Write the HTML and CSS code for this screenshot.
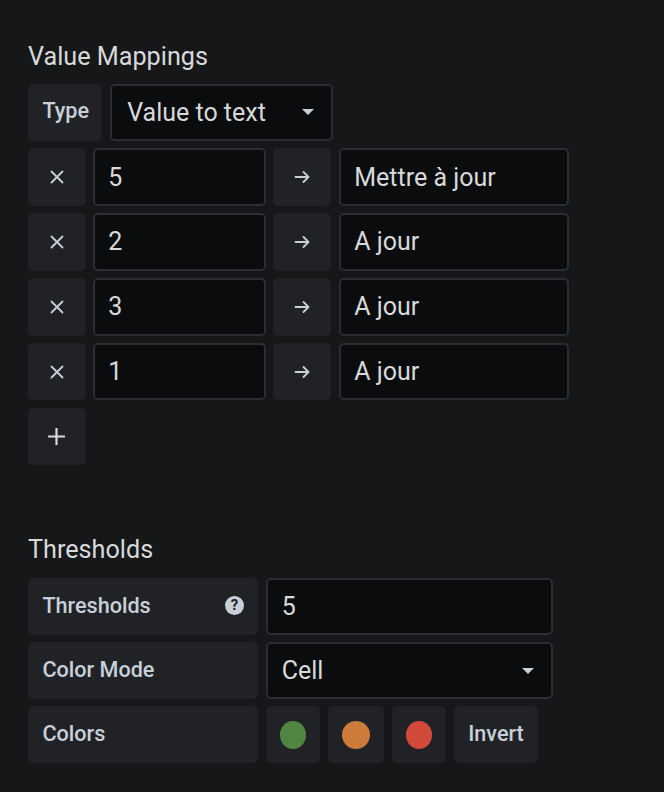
FILE: index.html
```html
<!DOCTYPE html>
<html>
<head>
<meta charset="utf-8">
<link rel="stylesheet" href="styles.css">
</head>
<body>
<div class="page">
  <section class="section">
    <h5 class="title title-first">Value Mappings</h5>
    <div class="rows">
      <div class="row">
        <div class="label label-type">Type</div>
        <div class="input select select-type"><span>Value to text</span><i class="caret"></i></div>
      </div>
      <div class="row">
        <div class="btn btn-sq"><svg width="14" height="14" viewBox="0 0 14 14"><path d="M1.5 1.5L12.5 12.5M12.5 1.5L1.5 12.5" stroke="#c7d0d9" stroke-width="1.8" stroke-linecap="round"/></svg></div>
        <div class="input input-from">5</div>
        <div class="btn btn-sq"><svg width="16" height="12" viewBox="0 0 16 12"><path d="M1.5 6H14.5M9.5 1L14.5 6L9.5 11" stroke="#c7d0d9" stroke-width="1.8" fill="none" stroke-linecap="round" stroke-linejoin="round"/></svg></div>
        <div class="input input-to">Mettre à jour</div>
      </div>
      <div class="row">
        <div class="btn btn-sq"><svg width="14" height="14" viewBox="0 0 14 14"><path d="M1.5 1.5L12.5 12.5M12.5 1.5L1.5 12.5" stroke="#c7d0d9" stroke-width="1.8" stroke-linecap="round"/></svg></div>
        <div class="input input-from">2</div>
        <div class="btn btn-sq"><svg width="16" height="12" viewBox="0 0 16 12"><path d="M1.5 6H14.5M9.5 1L14.5 6L9.5 11" stroke="#c7d0d9" stroke-width="1.8" fill="none" stroke-linecap="round" stroke-linejoin="round"/></svg></div>
        <div class="input input-to">A jour</div>
      </div>
      <div class="row">
        <div class="btn btn-sq"><svg width="14" height="14" viewBox="0 0 14 14"><path d="M1.5 1.5L12.5 12.5M12.5 1.5L1.5 12.5" stroke="#c7d0d9" stroke-width="1.8" stroke-linecap="round"/></svg></div>
        <div class="input input-from">3</div>
        <div class="btn btn-sq"><svg width="16" height="12" viewBox="0 0 16 12"><path d="M1.5 6H14.5M9.5 1L14.5 6L9.5 11" stroke="#c7d0d9" stroke-width="1.8" fill="none" stroke-linecap="round" stroke-linejoin="round"/></svg></div>
        <div class="input input-to">A jour</div>
      </div>
      <div class="row">
        <div class="btn btn-sq"><svg width="14" height="14" viewBox="0 0 14 14"><path d="M1.5 1.5L12.5 12.5M12.5 1.5L1.5 12.5" stroke="#c7d0d9" stroke-width="1.8" stroke-linecap="round"/></svg></div>
        <div class="input input-from">1</div>
        <div class="btn btn-sq"><svg width="16" height="12" viewBox="0 0 16 12"><path d="M1.5 6H14.5M9.5 1L14.5 6L9.5 11" stroke="#c7d0d9" stroke-width="1.8" fill="none" stroke-linecap="round" stroke-linejoin="round"/></svg></div>
        <div class="input input-to">A jour</div>
      </div>
      <div class="row">
        <div class="btn btn-sq"><svg width="19" height="19" viewBox="0 0 19 19"><path d="M9.5 1V18M1 9.5H18" stroke="#d8d9da" stroke-width="2.2"/></svg></div>
      </div>
    </div>
  </section>

  <section class="section">
    <h5 class="title title-second">Thresholds</h5>
    <div class="rows rows-tight">
      <div class="row">
        <div class="label label-wide"><span>Thresholds</span><span class="help">?</span></div>
        <div class="input input-wide">5</div>
      </div>
      <div class="row">
        <div class="label label-wide"><span>Color Mode</span></div>
        <div class="input select input-wide"><span>Cell</span><i class="caret"></i></div>
      </div>
      <div class="row row-colors">
        <div class="label label-wide"><span>Colors</span></div>
        <div class="btn btn-color btn-c1"><span class="dot dot-green"></span></div>
        <div class="btn btn-color btn-c2"><span class="dot dot-orange"></span></div>
        <div class="btn btn-color btn-c3"><span class="dot dot-red"></span></div>
        <div class="btn btn-invert">Invert</div>
      </div>
    </div>
  </section>
</div>
</body>
</html>
```

FILE: styles.css
```css
html, body {
  margin: 0;
  padding: 0;
  background: #161719;
}

body {
  font-family: Roboto, "Noto Sans", "Liberation Sans", sans-serif;
  color: #c7d0d9;
  width: 664px;
  height: 792px;
  overflow: hidden;
}

.page {
  padding: 42px 0 0 28px;
}

.title {
  margin: 0;
  font-size: 25.2px;
  line-height: 30px;
  font-weight: 400;
  color: #d8d9da;
}

.title-first {
  margin-bottom: 11.6px;
}

.title-second {
  margin-top: 70px;
  margin-bottom: 12.8px;
}

.rows {
  display: flex;
  flex-direction: column;
  gap: 7.2px;
}

.rows-tight {
  gap: 6.4px;
}

.row {
  display: flex;
  gap: 7.2px;
  height: 57.6px;
}

.row-colors {
  gap: 8px;
}

.label {
  box-sizing: border-box;
  height: 57.6px;
  background: #212226;
  border-radius: 5px;
  display: flex;
  align-items: center;
  padding: 0 14.4px 3px;
  font-size: 21.6px;
  font-weight: 500;
  color: #c7d0d9;
}

.label-type {
  width: 74px;
}

.label-wide {
  width: 230px;
  justify-content: space-between;
}

.help {
  width: 19px;
  height: 19px;
  border-radius: 50%;
  background: #c7d0d9;
  color: #212226;
  font-size: 15px;
  font-weight: 700;
  line-height: 19px;
  text-align: center;
  margin-right: -0.4px;
}

.input {
  box-sizing: border-box;
  height: 57.6px;
  background: #0b0c0e;
  border: 2px solid #2a2e33;
  border-radius: 5px;
  display: flex;
  align-items: center;
  padding: 0 14px 0 13.5px;
  font-size: 25px;
  color: #d8d9da;
}

.select {
  justify-content: space-between;
  padding-right: 17px;
}

.select-type {
  width: 223px;
  margin-left: 1px;
  padding-left: 15px;
}

.input-from {
  width: 173px;
}

.input-to {
  width: 230px;
  margin-left: 1px;
}

.input-wide {
  width: 287px;
  margin-left: 1px;
}

.caret {
  width: 0;
  height: 0;
  border-left: 6px solid transparent;
  border-right: 6px solid transparent;
  border-top: 6px solid #c7d0d9;
}

.btn {
  box-sizing: border-box;
  height: 57.6px;
  background: #212226;
  border-radius: 5px;
  display: flex;
  align-items: center;
  justify-content: center;
}

.btn-sq {
  width: 57.6px;
}

.btn-c1 { width: 54px; }
.btn-c2 { width: 56px; }
.btn-c3 { width: 54px; }

.dot {
  display: block;
  width: 26px;
  height: 28px;
  border-radius: 13px / 14px;
}

.dot-orange {
  width: 28px;
  border-radius: 50%;
}

.dot-green { background: #508642; }
.dot-orange { background: #cc7b3b; }
.dot-red { background: #d44a3a; }

.btn-invert {
  width: 84px;
  padding-bottom: 3px;
  font-size: 21.6px;
  font-weight: 500;
  color: #c7d0d9;
}
```
